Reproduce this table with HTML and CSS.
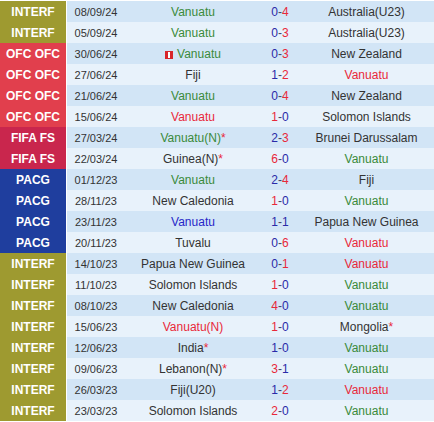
FILE: index.html
```html
<!DOCTYPE html>
<html>
<head>
<meta charset="utf-8">
<link rel="stylesheet" href="styles.css">
</head>
<body>
<table class="results">
  <colgroup>
    <col class="c-lg"><col class="c-dt"><col class="c-home"><col class="c-sc"><col class="c-away">
  </colgroup>
  <tbody>
    <tr class="odd"><td class="lg interf">INTERF</td><td class="dt">08/09/24</td><td class="tm g">Vanuatu</td><td class="sc"><span class="b">0</span>-<span class="r">4</span></td><td class="tm">Australia(U23)</td></tr>
    <tr class="even"><td class="lg interf">INTERF</td><td class="dt">05/09/24</td><td class="tm g">Vanuatu</td><td class="sc"><span class="b">0</span>-<span class="r">3</span></td><td class="tm">Australia(U23)</td></tr>
    <tr class="odd"><td class="lg ofc">OFC OFC</td><td class="dt">30/06/24</td><td class="tm g"><svg class="card" width="8" height="8" viewBox="0 0 8 8"><rect x="0" y="0" width="8" height="8" fill="#d8262c"/><rect x="3" y="1" width="2" height="6" fill="#fff"/></svg>Vanuatu</td><td class="sc"><span class="b">0</span>-<span class="r">3</span></td><td class="tm">New Zealand</td></tr>
    <tr class="even"><td class="lg ofc">OFC OFC</td><td class="dt">27/06/24</td><td class="tm">Fiji</td><td class="sc"><span class="b">1</span>-<span class="r">2</span></td><td class="tm r">Vanuatu</td></tr>
    <tr class="odd"><td class="lg ofc">OFC OFC</td><td class="dt">21/06/24</td><td class="tm g">Vanuatu</td><td class="sc"><span class="b">0</span>-<span class="r">4</span></td><td class="tm">New Zealand</td></tr>
    <tr class="even"><td class="lg ofc">OFC OFC</td><td class="dt">15/06/24</td><td class="tm r">Vanuatu</td><td class="sc"><span class="r">1</span>-<span class="b">0</span></td><td class="tm">Solomon Islands</td></tr>
    <tr class="odd"><td class="lg fifa">FIFA FS</td><td class="dt">27/03/24</td><td class="tm g">Vanuatu(N)<span class="star">*</span></td><td class="sc"><span class="b">2</span>-<span class="r">3</span></td><td class="tm">Brunei Darussalam</td></tr>
    <tr class="even"><td class="lg fifa">FIFA FS</td><td class="dt">22/03/24</td><td class="tm">Guinea(N)<span class="star">*</span></td><td class="sc"><span class="r">6</span>-<span class="b">0</span></td><td class="tm g">Vanuatu</td></tr>
    <tr class="odd"><td class="lg pacg">PACG</td><td class="dt">01/12/23</td><td class="tm g">Vanuatu</td><td class="sc"><span class="b">2</span>-<span class="r">4</span></td><td class="tm">Fiji</td></tr>
    <tr class="even"><td class="lg pacg">PACG</td><td class="dt">28/11/23</td><td class="tm">New Caledonia</td><td class="sc"><span class="r">1</span>-<span class="b">0</span></td><td class="tm g">Vanuatu</td></tr>
    <tr class="odd"><td class="lg pacg">PACG</td><td class="dt">23/11/23</td><td class="tm bl">Vanuatu</td><td class="sc"><span class="b">1</span>-<span class="b">1</span></td><td class="tm">Papua New Guinea</td></tr>
    <tr class="even"><td class="lg pacg">PACG</td><td class="dt">20/11/23</td><td class="tm">Tuvalu</td><td class="sc"><span class="b">0</span>-<span class="r">6</span></td><td class="tm r">Vanuatu</td></tr>
    <tr class="odd"><td class="lg interf">INTERF</td><td class="dt">14/10/23</td><td class="tm">Papua New Guinea</td><td class="sc"><span class="b">0</span>-<span class="r">1</span></td><td class="tm r">Vanuatu</td></tr>
    <tr class="even"><td class="lg interf">INTERF</td><td class="dt">11/10/23</td><td class="tm">Solomon Islands</td><td class="sc"><span class="r">1</span>-<span class="b">0</span></td><td class="tm g">Vanuatu</td></tr>
    <tr class="odd"><td class="lg interf">INTERF</td><td class="dt">08/10/23</td><td class="tm">New Caledonia</td><td class="sc"><span class="r">4</span>-<span class="b">0</span></td><td class="tm g">Vanuatu</td></tr>
    <tr class="even"><td class="lg interf">INTERF</td><td class="dt">15/06/23</td><td class="tm r">Vanuatu(N)</td><td class="sc"><span class="r">1</span>-<span class="b">0</span></td><td class="tm">Mongolia<span class="star">*</span></td></tr>
    <tr class="odd"><td class="lg interf">INTERF</td><td class="dt">12/06/23</td><td class="tm">India<span class="star">*</span></td><td class="sc"><span class="b">1</span>-<span class="b">0</span></td><td class="tm g">Vanuatu</td></tr>
    <tr class="even"><td class="lg interf">INTERF</td><td class="dt">09/06/23</td><td class="tm">Lebanon(N)<span class="star">*</span></td><td class="sc"><span class="r">3</span>-<span class="b">1</span></td><td class="tm g">Vanuatu</td></tr>
    <tr class="odd"><td class="lg interf">INTERF</td><td class="dt">26/03/23</td><td class="tm">Fiji(U20)</td><td class="sc"><span class="b">1</span>-<span class="r">2</span></td><td class="tm r">Vanuatu</td></tr>
    <tr class="even"><td class="lg interf">INTERF</td><td class="dt">23/03/23</td><td class="tm">Solomon Islands</td><td class="sc"><span class="r">2</span>-<span class="b">0</span></td><td class="tm g">Vanuatu</td></tr>
  </tbody>
</table>
</body>
</html>
```

FILE: styles.css
```css
html, body {
  margin: 0;
  padding: 0;
  background: #ffffff;
}
body {
  padding-top: 1px;
  font-family: "Liberation Sans", Arial, sans-serif;
}
.results {
  width: 434px;
  border-collapse: separate;
  border-spacing: 0;
  table-layout: fixed;
}
.c-lg { width: 67px; }
.c-dt { width: 58px; }
.c-home { width: 136px; }
.c-sc { width: 38px; }
.c-away { width: 135px; }

.results td {
  height: 21px;
  padding: 0;
  text-align: center;
  vertical-align: middle;
  white-space: nowrap;
  overflow: hidden;
  font-size: 12px;
  color: #333333;
}
.odd td { background: #d2e5f6; }
.even td { background: #e8f2fb; }

.results td.lg {
  color: #ffffff;
  font-weight: bold;
  font-size: 12px;
  border-right: 1px solid #ffffff;
}
.odd td.interf, .even td.interf { background: #9e9a30; }
.odd td.ofc, .even td.ofc { background: #e13f4d; }
.odd td.fifa, .even td.fifa { background: #c9264d; }
.odd td.pacg, .even td.pacg { background: #1f3e9e; }

.results td.dt {
  font-size: 11px;
  color: #333333;
}
.results td.g { color: #3a8a3a; }
.results td.r { color: #e8283a; }
.results td.bl { color: #2727c8; }
.star { color: #e8283a; }
.results td.sc { color: #444466; }
.sc .b { color: #2a2aa8; }
.sc .r { color: #e8283a; }
.card {
  display: inline-block;
  vertical-align: -1px;
  margin-right: 4px;
}
```
